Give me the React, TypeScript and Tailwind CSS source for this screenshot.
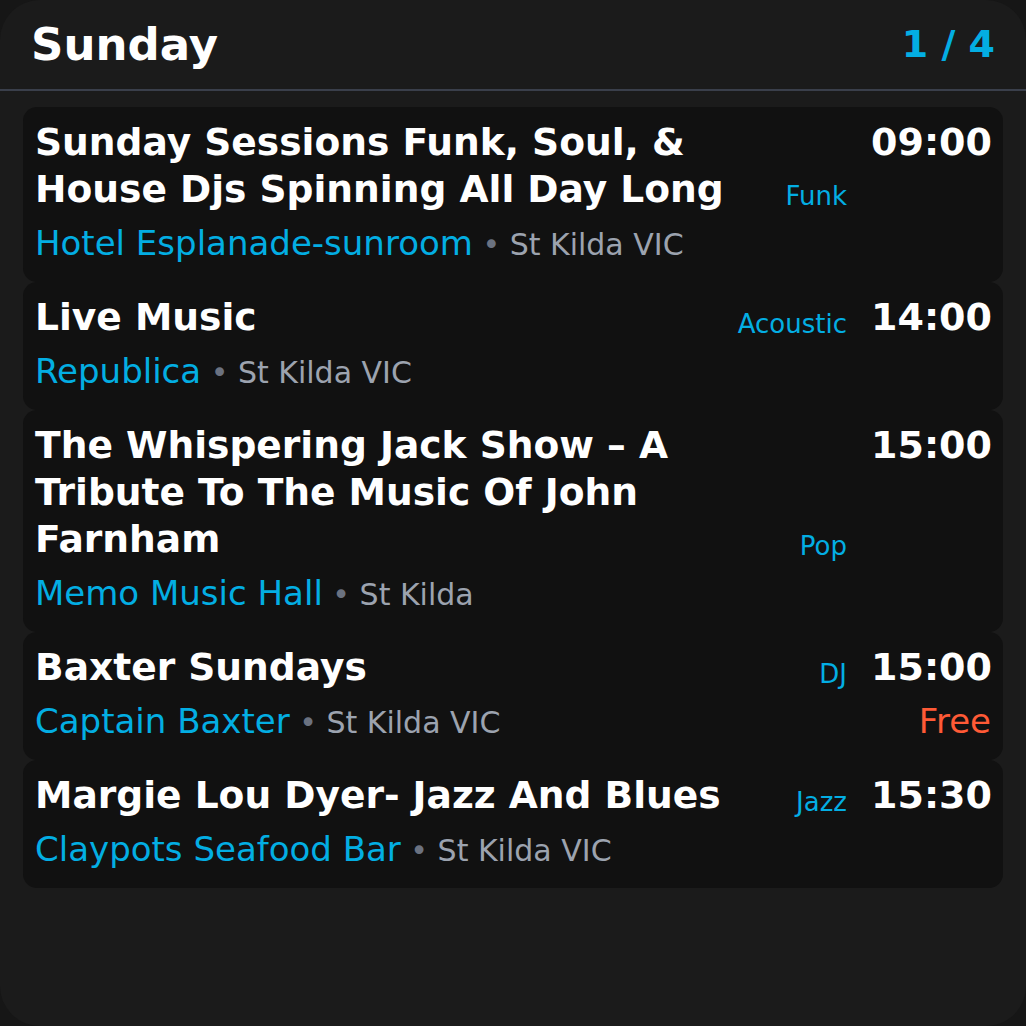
type Gig = {
  title: string;
  genre: string;
  time: string;
  venue: string;
  place: string;
  price?: string;
};

const gigs: Gig[] = [
  {
    title: "Sunday Sessions Funk, Soul, & House Djs Spinning All Day Long",
    genre: "Funk",
    time: "09:00",
    venue: "Hotel Esplanade-sunroom",
    place: "St Kilda VIC",
  },
  {
    title: "Live Music",
    genre: "Acoustic",
    time: "14:00",
    venue: "Republica",
    place: "St Kilda VIC",
  },
  {
    title: "The Whispering Jack Show – A Tribute To The Music Of John Farnham",
    genre: "Pop",
    time: "15:00",
    venue: "Memo Music Hall",
    place: "St Kilda",
  },
  {
    title: "Baxter Sundays",
    genre: "DJ",
    time: "15:00",
    venue: "Captain Baxter",
    place: "St Kilda VIC",
    price: "Free",
  },
  {
    title: "Margie Lou Dyer- Jazz And Blues",
    genre: "Jazz",
    time: "15:30",
    venue: "Claypots Seafood Bar",
    place: "St Kilda VIC",
  },
];

function GigCard({ gig }: { gig: Gig }) {
  return (
    <div className="grid grid-cols-[1fr_auto_120px] gap-x-6 rounded-[14px] bg-[#111111] pl-3 pr-3 pt-3 pb-[15px]">
      <div className="text-[37.6px] font-bold leading-[47px] text-white">{gig.title}</div>
      <div className="self-end text-[26px] leading-[33px] text-[#03aee3]">{gig.genre}</div>
      <div className="text-right text-[38px] font-bold leading-[47px] text-white">{gig.time}</div>
      <div className="col-span-2 mt-[6px] h-[48px] whitespace-nowrap text-[34px] leading-[48px]">
        <span className="text-[#03aee3]">{gig.venue}</span>
        <span className="text-[30px] leading-none text-[#6b7280]"> • </span>
        <span className="text-[30px] leading-none text-[#9ca3af]">{gig.place}</span>
      </div>
      <div className="mt-[6px] text-right text-[34px] leading-[48px] text-[#ff5a36]">{gig.price}</div>
    </div>
  );
}

export default function App() {
  return (
    <div className="min-h-screen bg-[#161616]" style={{ fontFamily: '"DejaVu Sans", sans-serif' }}>
      <div className="flex h-screen flex-col rounded-[40px] bg-[#1b1b1b]">
        <div className="flex h-[91px] items-center justify-between border-b-2 border-[#3a3f4b] px-[31px]">
          <h1 className="text-[45px] font-bold text-white">Sunday</h1>
          <span className="text-[38px] font-bold text-[#03aee3]">1 / 4</span>
        </div>
        <div className="flex flex-col px-[23px] pt-4">
          {gigs.map((g, i) => (
            <GigCard key={i} gig={g} />
          ))}
        </div>
      </div>
    </div>
  );
}
